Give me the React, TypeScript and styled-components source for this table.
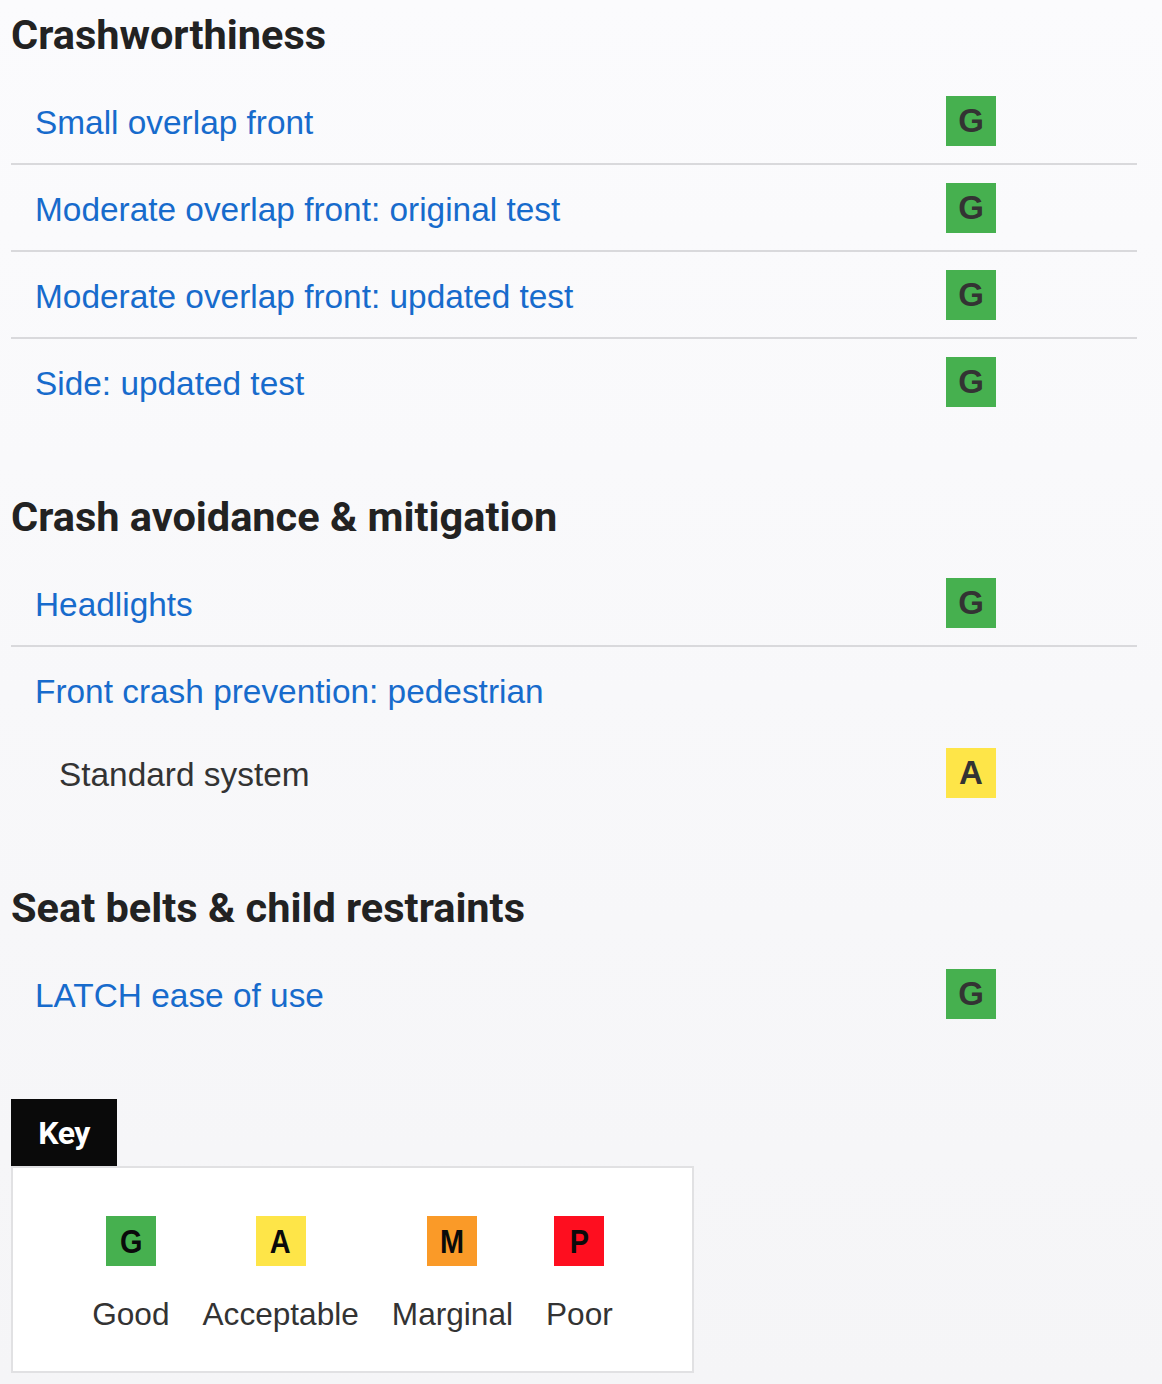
import styled, { createGlobalStyle } from "styled-components";

type Grade = "G" | "A" | "M" | "P";

const gradeColors: Record<Grade, string> = {
  G: "#46b04f",
  A: "#fee548",
  M: "#fa9a28",
  P: "#fe0e1f",
};

type Row = { label: string; grade?: Grade; sub?: boolean; divider?: boolean };
type Section = { title: string; rows: Row[] };

const sections: Section[] = [
  {
    title: "Crashworthiness",
    rows: [
      { label: "Small overlap front", grade: "G", divider: true },
      { label: "Moderate overlap front: original test", grade: "G", divider: true },
      { label: "Moderate overlap front: updated test", grade: "G", divider: true },
      { label: "Side: updated test", grade: "G" },
    ],
  },
  {
    title: "Crash avoidance & mitigation",
    rows: [
      { label: "Headlights", grade: "G", divider: true },
      { label: "Front crash prevention: pedestrian" },
      { label: "Standard system", grade: "A", sub: true },
    ],
  },
  {
    title: "Seat belts & child restraints",
    rows: [{ label: "LATCH ease of use", grade: "G" }],
  },
];

const keyItems: { grade: Grade; label: string }[] = [
  { grade: "G", label: "Good" },
  { grade: "A", label: "Acceptable" },
  { grade: "M", label: "Marginal" },
  { grade: "P", label: "Poor" },
];

const GlobalStyle = createGlobalStyle`
  html, body {
    margin: 0;
    padding: 0;
  }
  body {
    min-height: 1384px;
    background: linear-gradient(to bottom, #fbfbfd, #f5f5f7);
    font-family: "Liberation Sans", Arial, sans-serif;
  }
`;

const Page = styled.div`
  width: 1126px;
  padding: 12px 11px 0;
`;

const SectionBlock = styled.section`
  margin-bottom: 70px;
`;

const Heading = styled.h2`
  margin: 0 0 20px;
  font-family: Roboto, "Liberation Sans", sans-serif;
  font-size: 41.5px;
  line-height: 46px;
  font-weight: 700;
  color: #222;
`;

const RatingRow = styled.div<{ $divider?: boolean; $sub?: boolean }>`
  display: grid;
  grid-template-columns: 1fr 191px;
  align-items: center;
  min-height: 50px;
  padding: ${(p) => (p.$sub ? "16px 0 17px 48px" : "18px 0 17px 24px")};
  border-bottom: ${(p) => (p.$divider ? "2px solid #d9d9dc" : "none")};
`;

const RowLink = styled.a`
  padding-top: 3px;
  font-size: 33.4px;
  color: #176bcc;
  text-decoration: none;
  cursor: pointer;
`;

const RowText = styled.span`
  padding-top: 3px;
  font-size: 33.4px;
  color: #333;
`;

const Badge = styled.div<{ $grade: Grade }>`
  width: 50px;
  height: 50px;
  display: flex;
  align-items: center;
  justify-content: center;
  background: ${(p) => gradeColors[p.$grade]};
  color: #333;
  font-family: "Liberation Sans", Arial, sans-serif;
  font-weight: 700;
  font-size: 33px;
`;

const KeyWrap = styled.div`
  margin-top: -7px;
  width: 683px;
`;

const KeyTab = styled.div`
  display: inline-flex;
  align-items: center;
  justify-content: center;
  width: 106px;
  height: 67px;
  background: #0a0a0a;
  color: #fff;
  font-family: Roboto, "Liberation Sans", sans-serif;
  font-weight: 700;
  font-size: 32px;
  letter-spacing: -0.5px;
`;

const KeyPanel = styled.div`
  box-sizing: border-box;
  height: 207px;
  background: #fff;
  border: 2px solid #e1e1e3;
  display: flex;
  justify-content: center;
  gap: 33px;
  padding-top: 48px;
`;

const KeyItem = styled.div`
  display: flex;
  flex-direction: column;
  align-items: center;
  gap: 29px;
`;

const KeyBadge = styled(Badge)`
  color: #0a0a0a;
  font-size: 34px;
  span {
    display: inline-block;
    transform: scaleX(0.85);
  }
`;

const KeyLabel = styled.span`
  font-size: 31.6px;
  line-height: 38px;
  color: #333;
`;

export default function App() {
  return (
    <>
      <GlobalStyle />
      <Page>
        {sections.map((s) => (
          <SectionBlock key={s.title}>
            <Heading>{s.title}</Heading>
            {s.rows.map((r) => (
              <RatingRow key={r.label} $divider={r.divider} $sub={r.sub}>
                {r.sub ? <RowText>{r.label}</RowText> : <RowLink>{r.label}</RowLink>}
                <div>{r.grade && <Badge $grade={r.grade}>{r.grade}</Badge>}</div>
              </RatingRow>
            ))}
          </SectionBlock>
        ))}
        <KeyWrap>
          <KeyTab>Key</KeyTab>
          <KeyPanel>
            {keyItems.map((k) => (
              <KeyItem key={k.grade}>
                <KeyBadge $grade={k.grade}>
                  <span>{k.grade}</span>
                </KeyBadge>
                <KeyLabel>{k.label}</KeyLabel>
              </KeyItem>
            ))}
          </KeyPanel>
        </KeyWrap>
      </Page>
    </>
  );
}
